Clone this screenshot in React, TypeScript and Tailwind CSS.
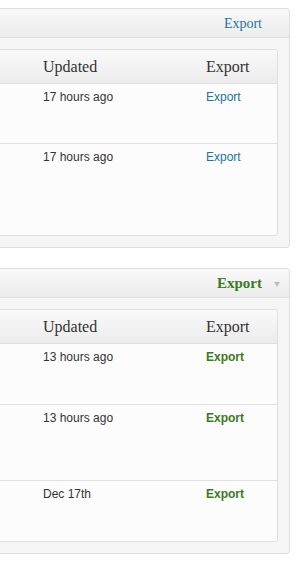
import React from "react";

type Row = { updated: string; h: string };

const sans = { fontFamily: '"Liberation Sans", Arial, sans-serif' };
const serif = { fontFamily: '"Liberation Serif", "Times New Roman", serif' };

function Panel({
  rows,
  green,
}: {
  rows: Row[];
  green?: boolean;
}) {
  return (
    <div className="rounded-[3px] border border-[#dfdfdf] bg-[#f5f5f5]">
      <div
        className={`flex h-[29px] items-center justify-end rounded-t-[3px] border-b border-[#dfdfdf] bg-linear-to-b from-[#f9f9f9] to-[#ececec] ${green ? "pr-[9px]" : "pr-[12px]"}`}
      >
        {green ? (
          <>
            <span className="text-[15px] font-bold text-[#3a7b1e]" style={serif}>
              Export
            </span>
            <svg width="6" height="5" viewBox="0 0 6 5" className="ml-[12px] mt-[2px]">
              <path d="M0 0 L6 0 L3 5 Z" fill="#bdbdbd" />
            </svg>
          </>
        ) : (
          <span className="mr-[15px] text-[14px] text-[#21759b]" style={serif}>
            Export
          </span>
        )}
      </div>
      <div className="pb-[11px] pl-[10px] pr-[11px] pt-[11px]">
        <div className="overflow-hidden rounded-[3px] border border-[#dfdfdf] bg-[#fcfcfc]">
          <div className="flex h-[34px] items-center border-b border-[#dfdfdf] bg-linear-to-b from-[#f9f9f9] to-[#ececec] text-[16px] text-[#333]" style={serif}>
            <div className="flex-1" />
            <div className="w-[163px]">Updated</div>
            <div className="w-[71px]">Export</div>
          </div>
          {rows.map((r, i) => (
            <div
              key={i}
              className={`flex items-start pt-[5px] text-[12px] leading-[16px] ${i < rows.length - 1 ? "border-b border-[#dfdfdf]" : ""}`}
              style={{ ...sans, height: r.h }}
            >
              <div className="flex-1" />
              <div className="w-[163px] text-[#333]">{r.updated}</div>
              <div className={`w-[71px] ${green ? "font-bold text-[#3a7b1e]" : "text-[#21759b]"}`}>Export</div>
            </div>
          ))}
        </div>
      </div>
    </div>
  );
}

export default function App() {
  return (
    <div className="h-[563px] w-[296px] overflow-hidden bg-white">
      <div className="ml-[-21px] w-[311px] pt-[8px]">
        <Panel
          rows={[
            { updated: "17 hours ago", h: "60px" },
            { updated: "17 hours ago", h: "91px" },
          ]}
        />
        <div className="h-[20px]" />
        <Panel
          green
          rows={[
            { updated: "13 hours ago", h: "61px" },
            { updated: "13 hours ago", h: "76px" },
            { updated: "Dec 17th", h: "60px" },
          ]}
        />
      </div>
    </div>
  );
}
